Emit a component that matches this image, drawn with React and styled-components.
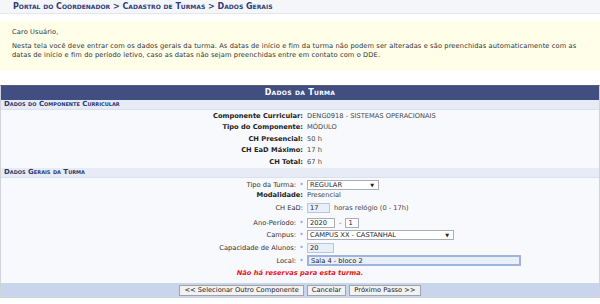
import React from 'react'
import styled, { createGlobalStyle } from 'styled-components'

const GlobalStyle = createGlobalStyle`
body {
  margin: 0;
  background: #fff;
  font-family: "DejaVu Sans", Verdana, sans-serif;
  font-size: 6.7px;
  font-variant-ligatures: none;
  color: #222;
}
`

const Page = styled.div`
width: 600px;
`

const Crumbs = styled.div`
height: 13px;
padding-left: 13px;
background: #f5f6f9;
border-bottom: 1px solid #e4e6eb;
font-variant: small-caps;
font-weight: bold;
font-size: 8px;
line-height: 13px;
color: #2d3b7a;
`

const Notice = styled.div`
margin-top: 7px;
background: #fefee9;
padding: 7px 20px 11px 12px;
line-height: 9px;
letter-spacing: 0.1px;
color: #333;

p {
  margin: 0 0 5px;
}
p:last-child {
  margin: 0;
}
`

const Form = styled.div`
margin-top: 14px;
border: 1px solid #cfd3da;
border-top: 1px solid #5a5f6e;
background: #f8f9fc;
`

const Caption = styled.div`
height: 14px;
line-height: 14px;
background: #404e82;
color: #fff;
text-align: center;
font-variant: small-caps;
font-weight: bold;
font-size: 8px;
letter-spacing: 0.3px;
`

const SubHead = styled.div`
height: 9px;
line-height: 9px;
padding-left: 3px;
background: #e6ebf5;
border-bottom: 1px solid #d9e0ee;
font-variant: small-caps;
font-weight: bold;
font-size: 7px;
color: #2b3a6e;
`

const Rows = styled.div`
padding: ${p => p.$pad || '0'};
`

const Row = styled.div`
display: grid;
grid-template-columns: 302px 1fr;
column-gap: 4px;
align-items: center;
min-height: ${p => p.$h || 11.5}px;
`

const Label = styled.div`
text-align: right;
font-weight: ${p => (p.$bold ? 'bold' : 'normal')};
color: ${p => (p.$bold ? '#222' : '#333')};
`

const Star = styled.span`
color: #3b6fd4;
margin-left: 4px;
font-size: 6px;
`

const Value = styled.div`
display: flex;
align-items: center;
gap: 4px;
color: #444;
`

const Select = styled.div`
width: ${p => p.$w}px;
height: 10px;
box-sizing: border-box;
border: 1px solid #a9adb5;
background: #fff;
display: flex;
align-items: center;
justify-content: space-between;
padding: 0 4px 0 2px;
color: #222;

span {
  font-size: 5px;
}
`

const Input = styled.div`
width: ${p => p.$w}px;
height: ${p => p.$h || 10}px;
box-sizing: border-box;
border: ${p => (p.$focus ? '2px solid #9fb3dc' : p.$soft ? '1px solid #b9c6de' : '1px solid #a9adb5')};
background: ${p => (p.$soft || p.$focus ? '#e9eff9' : '#fff')};
display: flex;
align-items: center;
padding-left: 2px;
color: #222;
`

const Error = styled.div`
text-align: center;
color: #e8141c;
font-weight: bold;
font-style: italic;
padding: 2px 0 6px;
`

const Footer = styled.div`
background: #c8d5ec;
display: flex;
justify-content: center;
gap: 3px;
padding: 2px 0 1px;
`

const Button = styled.button`
height: 11px;
padding: 0 4px;
font-family: inherit;
font-size: 6.7px;
color: #222;
background: #f2f2f2;
border: 1px solid #a0a3a8;
border-radius: 0;
line-height: 9px;
`

export default function App() {
  return (
    <Page>
      <GlobalStyle />
      <Crumbs>Portal do Coordenador &gt; Cadastro de Turmas &gt; Dados Gerais</Crumbs>
      <Notice>
        <p>Caro Usuário,</p>
        <p>
          Nesta tela você deve entrar com os dados gerais da turma. As datas de início e fim da turma não podem ser alteradas e são preenchidas automaticamente com as datas de início e fim do período letivo, caso as datas não sejam preenchidas entre em contato com o DDE.
        </p>
      </Notice>
      <Form>
        <Caption>Dados da Turma</Caption>
        <SubHead>Dados do Componente Curricular</SubHead>
        <Rows>
          <Row><Label $bold>Componente Curricular:</Label><Value>DENG0918 - SISTEMAS OPERACIONAIS</Value></Row>
          <Row><Label $bold>Tipo do Componente:</Label><Value>MÓDULO</Value></Row>
          <Row><Label $bold>CH Presencial:</Label><Value>50 h</Value></Row>
          <Row><Label $bold>CH EaD Máximo:</Label><Value>17 h</Value></Row>
          <Row><Label $bold>CH Total:</Label><Value>67 h</Value></Row>
        </Rows>
        <SubHead>Dados Gerais da Turma</SubHead>
        <Rows $pad="2px 0 0">
          <Row $h={11}><Label>Tipo da Turma:<Star>*</Star></Label><Value><Select $w={72}>REGULAR<span>▼</span></Select></Value></Row>
          <Row $h={9}><Label $bold>Modalidade:</Label><Value>Presencial</Value></Row>
          <Row $h={17}><Label>CH EaD:</Label><Value><Input $w={23} $soft>17</Input>horas relógio (0 - 17h)</Value></Row>
          <Row $h={12}><Label>Ano-Período:<Star>*</Star></Label><Value><Input $w={28}>2020</Input>-<Input $w={14}>1</Input></Value></Row>
          <Row $h={12}><Label>Campus:<Star>*</Star></Label><Value><Select $w={147}>CAMPUS XX - CASTANHAL<span>▼</span></Select></Value></Row>
          <Row $h={14}><Label>Capacidade de Alunos:<Star>*</Star></Label><Value><Input $w={27} $soft>20</Input></Value></Row>
          <Row $h={12}><Label>Local:<Star>*</Star></Label><Value><Input $w={214} $h={11} $focus>Sala 4 - bloco 2</Input></Value></Row>
        </Rows>
        <Error>Não há reservas para esta turma.</Error>
        <Footer>
          <Button>&lt;&lt; Selecionar Outro Componente</Button>
          <Button>Cancelar</Button>
          <Button>Próximo Passo &gt;&gt;</Button>
        </Footer>
      </Form>
    </Page>
  )
}
